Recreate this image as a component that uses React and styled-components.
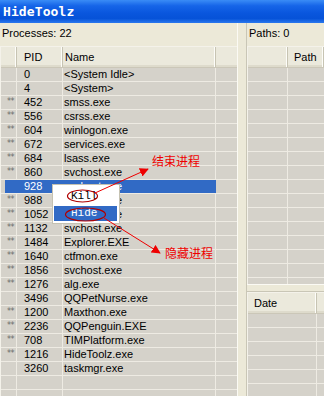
import styled, { createGlobalStyle } from 'styled-components'

const processes = [
  { pid: '0', name: '<System Idle>' },
  { pid: '4', name: '<System>' },
  { pid: '452', name: 'smss.exe', mark: true },
  { pid: '556', name: 'csrss.exe', mark: true },
  { pid: '604', name: 'winlogon.exe', mark: true },
  { pid: '672', name: 'services.exe', mark: true },
  { pid: '684', name: 'lsass.exe', mark: true },
  { pid: '860', name: 'svchost.exe', mark: true },
  { pid: '928', name: 'svchost.exe', selected: true },
  { pid: '988', name: 'svchost.exe', mark: true },
  { pid: '1052', name: 'svchost.exe', mark: true },
  { pid: '1132', name: 'svchost.exe', mark: true },
  { pid: '1484', name: 'Explorer.EXE', mark: true },
  { pid: '1640', name: 'ctfmon.exe', mark: true },
  { pid: '1856', name: 'svchost.exe', mark: true },
  { pid: '1276', name: 'alg.exe', mark: true },
  { pid: '3496', name: 'QQPetNurse.exe' },
  { pid: '1200', name: 'Maxthon.exe', mark: true },
  { pid: '2236', name: 'QQPenguin.EXE', mark: true },
  { pid: '708', name: 'TIMPlatform.exe', mark: true },
  { pid: '1216', name: 'HideToolz.exe', mark: true },
  { pid: '3260', name: 'taskmgr.exe' },
  { pid: '', name: '' },
  { pid: '', name: '' },
]

const blankRows = n => Array.from({ length: n }, (_, i) => i)

const App = () => {
  return (
    <>
      <GlobalStyle />
      <Window>
        <TitleBar>HideToolz</TitleBar>
        <Body>
          <LeftPane>
            <PaneLabel>Processes: 22</PaneLabel>
            <ListView>
              <ProcessHeader>
                <HeaderCell />
                <HeaderCell pad={7}>PID</HeaderCell>
                <HeaderCell pad={2}>Name</HeaderCell>
                <HeaderCell last />
              </ProcessHeader>
              {processes.map((p, i) => (
                <ProcessRow key={i}>
                  <MarkCell selected={p.selected}>{p.mark ? '**' : ''}</MarkCell>
                  <Cell pad={7} selected={p.selected}>{p.pid}</Cell>
                  <Cell pad={1} selected={p.selected}>{p.name}</Cell>
                  <Cell last />
                </ProcessRow>
              ))}
            </ListView>
          </LeftPane>
          <VSplitter />
          <RightPane>
            <PaneLabel>Paths: 0</PaneLabel>
            <ListView top>
              <PathHeader>
                <HeaderCell />
                <HeaderCell pad={6}>Path</HeaderCell>
              </PathHeader>
              {blankRows(16).map(i => (
                <PathRow key={i}>
                  <Cell />
                  <Cell last />
                </PathRow>
              ))}
            </ListView>
            <HSplitter />
            <ListView>
              <DateHeader>
                <HeaderCell pad={6}>Date</HeaderCell>
                <HeaderCell last />
              </DateHeader>
              {blankRows(7).map(i => (
                <DateRow key={i}>
                  <Cell />
                  <Cell last />
                </DateRow>
              ))}
            </ListView>
          </RightPane>
        </Body>

        <ContextMenu>
          <MenuItem>Kill</MenuItem>
          <MenuItem active>Hide</MenuItem>
        </ContextMenu>

        <Annotations width="324" height="396" viewBox="0 0 324 396">
          <defs>
            <marker id="head" viewBox="0 0 10 10" refX="9" refY="5" markerWidth="9" markerHeight="9" markerUnits="userSpaceOnUse" orient="auto">
              <path d="M0 0 L10 5 L0 10 Z" fill="#ee0000" />
            </marker>
          </defs>
          <ellipse cx="82.5" cy="196" rx="15" ry="6" fill="none" stroke="#b00000" strokeWidth="1.2" />
          <ellipse cx="85.5" cy="214.5" rx="20" ry="6.5" fill="none" stroke="#b00000" strokeWidth="1.2" />
          <line x1="95" y1="193" x2="148" y2="169" stroke="#ee0000" strokeWidth="1" markerEnd="url(#head)" />
          <line x1="104" y1="218" x2="160" y2="253" stroke="#ee0000" strokeWidth="1" markerEnd="url(#head)" />
        </Annotations>
        <Callout x={152} y={154}>结束进程</Callout>
        <Callout x={165} y={246}>隐藏进程</Callout>
      </Window>
    </>
  )
}

const GlobalStyle = createGlobalStyle`
  html, body {
    margin: 0;
    padding: 0;
    background: #ece9d8;
  }
  body {
    font-family: "Liberation Sans", Arial, sans-serif;
    font-size: 11px;
    color: #000;
  }
`

const Window = styled.div`
  width: 324px;
  height: 396px;
  position: relative;
  overflow: hidden;
  display: flex;
  flex-direction: column;
  background: #ece9d8;
`

const TitleBar = styled.div`
  height: 23px;
  flex-shrink: 0;
  display: flex;
  align-items: center;
  padding-left: 3px;
  color: #fff;
  font-family: "DejaVu Sans Mono", "Liberation Mono", monospace;
  font-weight: bold;
  font-size: 13px;
  letter-spacing: 0.1px;
  background: linear-gradient(180deg, #3a8cf6 0%, #1665e8 25%, #0a57de 55%, #0652d8 80%, #2a78ee 100%);
`

const Body = styled.div`
  flex: 1;
  display: flex;
  min-height: 0;
`

const LeftPane = styled.div`
  width: 237px;
  display: flex;
  flex-direction: column;
`

const RightPane = styled.div`
  flex: 1;
  display: flex;
  flex-direction: column;
  min-width: 0;
`

const PaneLabel = styled.div`
  height: 23px;
  flex-shrink: 0;
  padding: 4px 0 0 2px;
  box-sizing: border-box;
  line-height: 13px;
  white-space: nowrap;
`

const VSplitter = styled.div`
  width: 10px;
  flex-shrink: 0;
  box-sizing: border-box;
  border-left: 1px solid #fbfaf4;
  border-right: 1px solid #c9c6b6;
`

const HSplitter = styled.div`
  height: 8px;
  flex-shrink: 0;
  box-sizing: border-box;
  border-top: 1px solid #fbfaf4;
  border-bottom: 1px solid #c9c6b6;
`

const ListView = styled.div`
  ${props => props.top ? 'height: 237px;' : 'flex: 1;'}
  flex-shrink: 0;
  overflow: hidden;
  background: #d5d2ca;
  border-top: 1px solid #f4f2ea;
  border-left: 1px solid #f4f2ea;
`

const headerBase = `
  display: grid;
  height: 20px;
  background: #ebe9dc;
  border-bottom: 1px solid #cbc7b8;
  box-shadow: inset 0 -2px 0 #dedbcc;
`

const ProcessHeader = styled.div`
  ${headerBase}
  grid-template-columns: 16px 46px 153px 1fr;
`

const PathHeader = styled.div`
  ${headerBase}
  grid-template-columns: 40px 1fr;
`

const DateHeader = styled.div`
  ${headerBase}
  grid-template-columns: 69px 1fr;
`

const HeaderCell = styled.div`
  padding-left: ${props => props.pad || 0}px;
  line-height: 20px;
  white-space: nowrap;
  overflow: hidden;
  border-right: ${props => props.last ? 'none' : '1px solid #c7c4b3'};
  box-shadow: ${props => props.last ? 'none' : 'inset -1px 0 0 #fdfdf9'};
`

const rowBase = `
  display: grid;
  height: 13px;
  border-bottom: 1px solid #eeebe3;
`

const ProcessRow = styled.div`
  ${rowBase}
  grid-template-columns: 16px 46px 153px 1fr;
`

const PathRow = styled.div`
  ${rowBase}
  grid-template-columns: 40px 1fr;
`

const DateRow = styled.div`
  ${rowBase}
  grid-template-columns: 69px 1fr;
`

const Cell = styled.div`
  padding-left: ${props => props.pad || 0}px;
  line-height: 13px;
  white-space: nowrap;
  overflow: hidden;
  color: ${props => props.selected ? '#fff' : '#000'};
  background: ${props => props.selected ? '#316ac5' : 'transparent'};
  border-right: ${props => props.last ? 'none' : `1px solid ${props.selected ? '#316ac5' : '#eeebe3'}`};
`

const MarkCell = styled.div`
  padding: 2px 0 0 6px;
  font-family: "DejaVu Sans", sans-serif;
  font-size: 8px;
  line-height: 8px;
  letter-spacing: -0.5px;
  color: #6a6a6a;
  overflow: hidden;
  border-right: 1px solid ${props => props.selected ? '#316ac5' : '#eeebe3'};
  background: ${props => props.selected ? 'linear-gradient(90deg, transparent 4px, #316ac5 4px)' : 'transparent'};
`

const ContextMenu = styled.div`
  position: absolute;
  left: 52px;
  top: 184px;
  width: 68px;
  box-sizing: border-box;
  padding: 1px 2px 2px 1px;
  background: #fff;
  border: 1px solid #c5c2b2;
  font-family: "Liberation Mono", "DejaVu Sans Mono", monospace;
  font-size: 11px;
`

const MenuItem = styled.div`
  height: ${props => props.active ? 15 : 19}px;
  line-height: ${props => props.active ? 15 : 21}px;
  margin-top: ${props => props.active ? 1 : 0}px;
  padding-left: 17px;
  color: ${props => props.active ? '#fff' : '#000'};
  background: ${props => props.active ? '#316ac5' : 'transparent'};
`

const Annotations = styled.svg`
  position: absolute;
  left: 0;
  top: 0;
  pointer-events: none;
`

const Callout = styled.div`
  position: absolute;
  left: ${props => props.x}px;
  top: ${props => props.y}px;
  color: #ee0000;
  font-family: "Noto Sans CJK SC", sans-serif;
  font-size: 12px;
  line-height: 14px;
  white-space: nowrap;
`

export default App
